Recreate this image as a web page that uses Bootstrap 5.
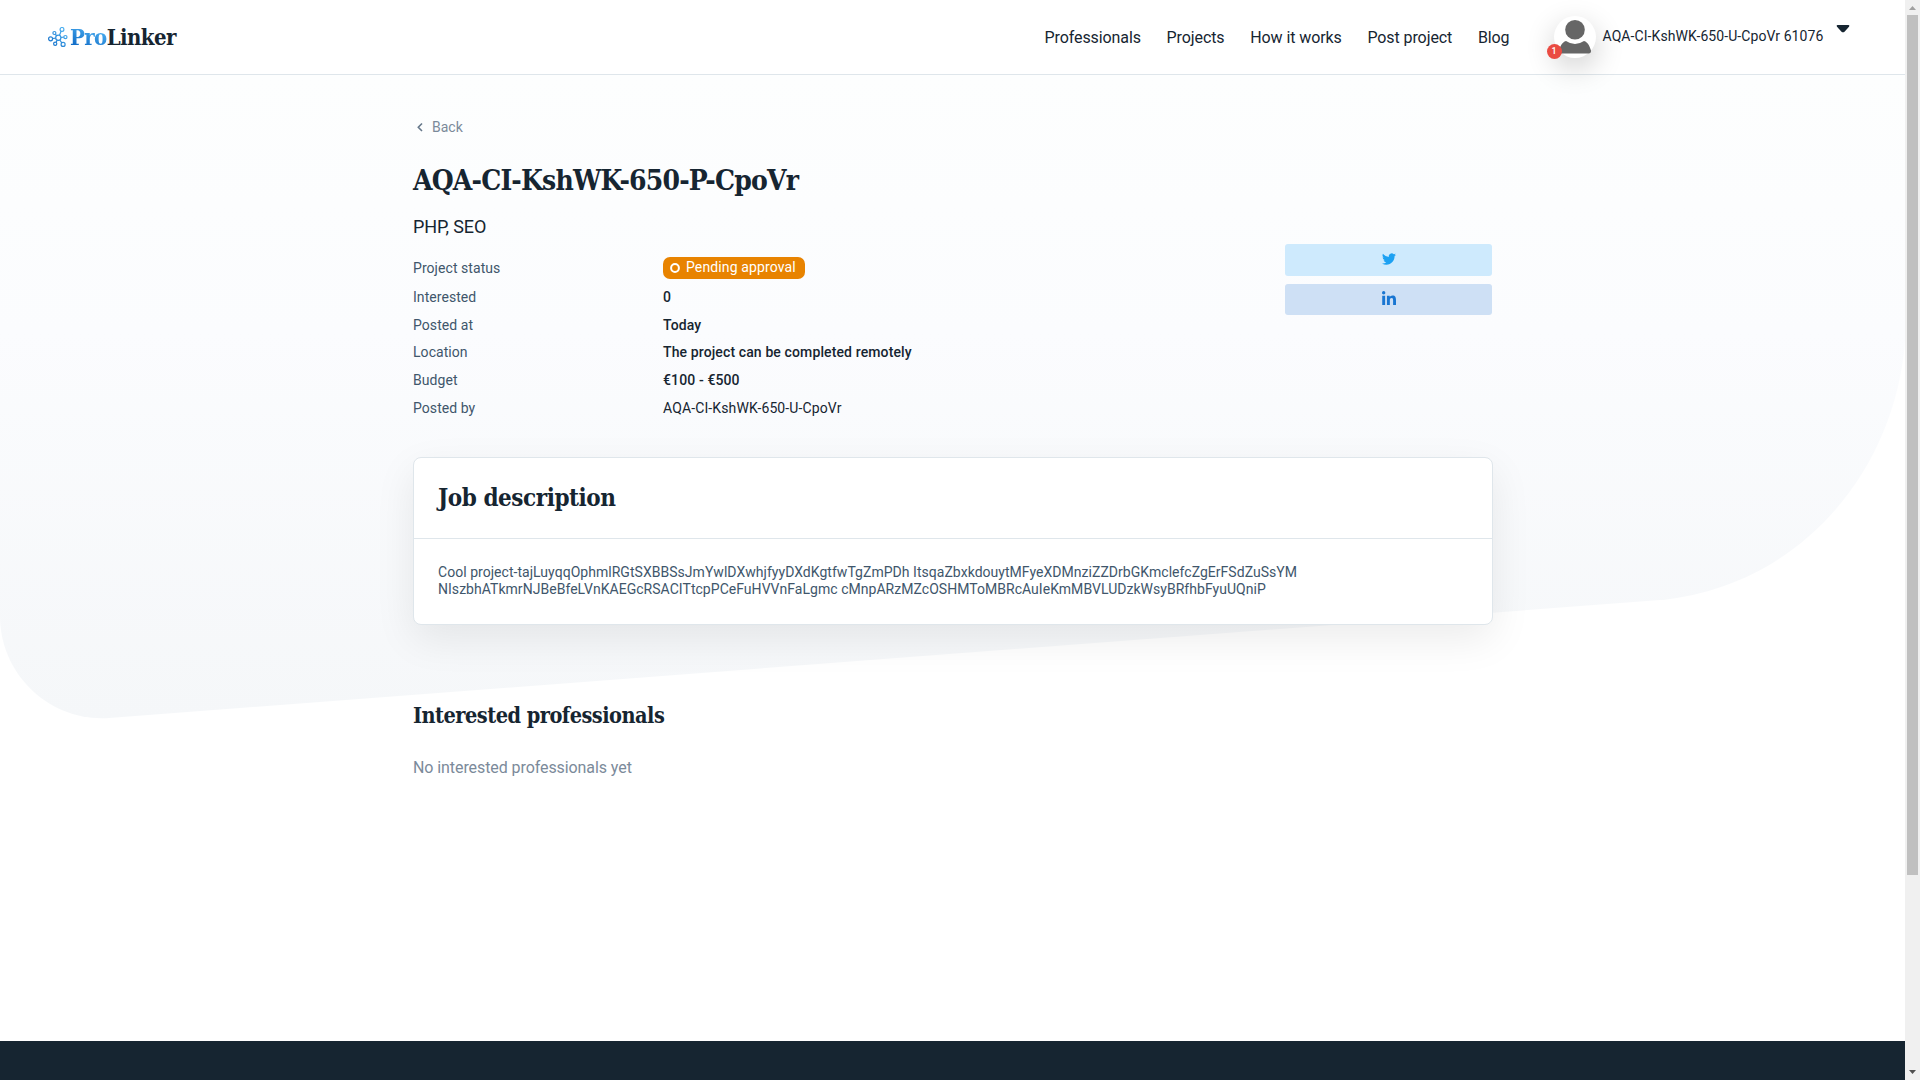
<!DOCTYPE html>
<html lang="en">
<head>
<meta charset="utf-8">
<meta name="viewport" content="width=device-width, initial-scale=1">
<title>ProLinker</title>
<link href="https://cdn.jsdelivr.net/npm/bootstrap@5.3.0/dist/css/bootstrap.min.css" rel="stylesheet">
<style>
html,body{height:100%;overflow:hidden}
body{font-family:Roboto,"Liberation Sans",sans-serif;color:#162531;background:#fff;font-size:14px}
.shell{height:1080px}
.site-header{height:75px;border-bottom:1px solid #dfe6eb;background:#fff;padding-left:48px}
.slab{font-family:"Roboto Slab","DejaVu Serif Condensed","DejaVu Serif",serif;font-weight:700;color:#162531;white-space:nowrap}
.brand-text{font-size:22px;line-height:26px;margin-left:2px;letter-spacing:-.6px}
.brand-text b{background:linear-gradient(20deg,#0b66c3 10%,#55b9f7 90%);-webkit-background-clip:text;background-clip:text;color:transparent}
.main-nav{gap:25.7px;font-size:16px;letter-spacing:-.09px;margin-top:1px}
.main-nav a,.user-name{color:#162531;text-decoration:none;white-space:nowrap}
.avatar{width:42px;height:42px;margin:0 0 1px 44px;box-shadow:0 10px 30px rgba(0,0,0,.2)}
.count{left:-7px;bottom:-1px;width:15px;height:15px;background:#ea4b42;font-size:9px;line-height:15px;font-weight:500}
.user-name{margin:0 0 1px 7px;width:222px;font-size:14px;letter-spacing:.08px}
.caret{margin:0 55.5px 17px 11px}
.hero-bg{left:0;top:75px;z-index:0}
.content{width:1080px;margin-left:413px;flex:1}
.back-link{color:#7b8a9a;text-decoration:none;margin-top:42px;line-height:20px}
.page-title{font-size:28px;line-height:38px;margin:25px 0 0;letter-spacing:-.83px}
.skills{font-size:18px;line-height:24px;margin-top:15px;letter-spacing:-.1px}
.facts{margin-top:13px}
.facts dt{width:250px;font-weight:400;color:#40566b;letter-spacing:.06px}
.facts dd{margin:0;font-weight:500;letter-spacing:.12px}
.fact{height:27.6px}
.fact-first{height:32px}
.facts .status{background:#e88300;color:#fff;border-radius:7px;height:22px;padding:0 9px 1px 7px;gap:6px;font-weight:400}
.share{width:207px;gap:8px;margin:5px 1px 0 0}
.share a{border-radius:3px;height:31.5px;padding-bottom:2px}
.tw{background:#ceeafd}.li{background:#cee0f5}
.panel{border:1px solid #dfe6eb;border-radius:8px;box-shadow:0 14px 40px rgba(0,0,0,.08);height:168px;margin-top:35px;background:#fff}
.panel-head{height:81px;border-bottom:1px solid #dfe6eb;padding:0 24px}
.panel h2{font-size:24px;line-height:32px;margin:0;letter-spacing:-.45px}
.panel p{margin:25px 24px 0;line-height:17px;color:#40566b;white-space:nowrap;letter-spacing:.035px}
.sub-title{font-size:21.5px;line-height:32px;letter-spacing:-.5px;margin:75px 0 0}
.empty{font-size:16px;color:#7b8a9a;margin-top:24px;letter-spacing:-.08px}
.site-footer{height:39px;background:#162531}
.rail{width:15px;background:#f0f0f0}
.thumb{width:11px;height:860px;background:#c0c0c0}
</style>
</head>
<body>
<div class="shell d-flex">
<div class="d-flex flex-column flex-grow-1 position-relative">
<svg class="hero-bg position-absolute" width="1905" height="650" aria-hidden="true"><defs><linearGradient id="hg" x1="0" y1="0" x2="0" y2="1"><stop stop-color="#fdfefe"/><stop offset=".4" stop-color="#fbfcfe"/><stop offset="1" stop-color="#f5f7f9"/></linearGradient></defs><path d="M0 0H1905V267C1894 400 1797 512 1660 525L109 643C50 647 0 600 0 541Z" fill="url(#hg)"/></svg>
<header class="site-header d-flex align-items-center flex-shrink-0 position-relative">
<a href="#" class="d-flex align-items-center text-decoration-none me-auto">
<svg width="20" height="20" viewBox="0 0 20 20" fill="none" stroke="url(#lg)" stroke-width="1.2"><defs><linearGradient id="lg" x1="0" y1="20" x2="20" y2="0" gradientUnits="userSpaceOnUse"><stop stop-color="#0b66c3"/><stop offset="1" stop-color="#59bdf8"/></linearGradient></defs><circle cx="10.3" cy="10.8" r="2.6"/><circle cx="14" cy="2.4" r="1.9"/><circle cx="17.4" cy="10.1" r="1.6"/><circle cx="15.1" cy="17.4" r="2"/><circle cx="7.2" cy="16.8" r="1.6"/><circle cx="2.6" cy="11.8" r="2"/><circle cx="6.4" cy="6" r="1.5"/><path d="m11.4 8.4 1.8-4.3M12.9 10.5l2.8-.3M11.8 13l2 2.8M9.2 13.2l-1.1 2.1M7.7 11.1l-3.1.4M8.6 8.8 7.4 7.2"/></svg>
<span class="slab brand-text"><b>Pro</b>Linker</span></a>
<nav class="main-nav d-flex"><a href="#">Professionals</a><a href="#">Projects</a><a href="#">How it works</a><a href="#">Post project</a><a href="#">Blog</a></nav>
<div class="avatar rounded-circle bg-white position-relative flex-shrink-0"><svg class="d-block" width="42" height="42" viewBox="0 0 42 42" fill="#666"><circle cx="21" cy="13.8" r="9.8"/><path d="M12 25Q21 31 30 25C34 26 36 31 37 34.5Q37.300 37.500 34.500 37.500H7.500Q4.700 37.500 5 34.500C6 31 8 26 12 25Z"/></svg>
<span class="count position-absolute rounded-circle text-white text-center">1</span></div>
<a href="#" class="user-name">AQA-CI-KshWK-650-U-CpoVr 61076</a>
<svg class="caret" width="14" height="8" viewBox="0 0 14 8"><path d="M1.500 0H12.500Q14 .3 13 1.700L8.500 6.700Q7 8 5.500 6.700L1 1.700Q0 .3 1.500 0Z" fill="#162531"/></svg>
</header>
<main class="content d-flex flex-column position-relative">
<a href="#" class="back-link d-flex align-items-center"><svg width="19" height="12" viewBox="0 0 19 12" fill="none" stroke="#66788a" stroke-width="1.600"><path d="M9 2.500 5.300 6.300 9 10"/></svg>Back</a>
<h1 class="slab page-title">AQA-CI-KshWK-650-P-CpoVr</h1>
<div class="skills">PHP, SEO</div>
<div class="d-flex justify-content-between">
<dl class="facts mb-0">
<div class="fact fact-first d-flex align-items-center"><dt>Project status</dt><dd class="status d-flex align-items-center"><svg width="10" height="10"><circle cx="5" cy="5" r="3.900" fill="none" stroke="#fff" stroke-width="2"/></svg>Pending approval</dd></div>
<div class="fact d-flex align-items-center"><dt>Interested</dt><dd>0</dd></div>
<div class="fact d-flex align-items-center"><dt>Posted at</dt><dd>Today</dd></div>
<div class="fact d-flex align-items-center"><dt>Location</dt><dd>The project can be completed remotely</dd></div>
<div class="fact d-flex align-items-center"><dt>Budget</dt><dd>€100 - €500</dd></div>
<div class="fact d-flex align-items-center"><dt>Posted by</dt><dd class="fw-normal">AQA-CI-KshWK-650-U-CpoVr</dd></div>
</dl>
<div class="share d-flex flex-column">
<a href="#" class="tw d-flex align-items-center justify-content-center" aria-label="Twitter"><svg width="14" height="14" viewBox="0 0 24 24" fill="#1da1f2"><path d="M24 4.600a10 10 0 0 1-2.800.8 5 5 0 0 0 2.100-2.700 10 10 0 0 1-3.100 1.200 4.900 4.900 0 0 0-8.400 4.500A14 14 0 0 1 1.700 3.200a4.900 4.900 0 0 0 1.500 6.500 5 5 0 0 1-2.200-.6v.1a4.900 4.900 0 0 0 3.900 4.800 5 5 0 0 1-2.200.1 4.900 4.900 0 0 0 4.600 3.400A10 10 0 0 1 0 19.500 14 14 0 0 0 7.500 21.700c9.100 0 14.400-7.700 14-14.600A10 10 0 0 0 24 4.600z"/></svg></a>
<a href="#" class="li d-flex align-items-center justify-content-center" aria-label="LinkedIn"><svg width="14" height="14" viewBox="0 0 448 448" fill="#1976d2"><path d="M100 448H7V149h93zM53.800 108.100C24.100 108.100 0 83.500 0 53.800a53.800 53.800 0 0 1 107.600 0c0 29.700-24.100 54.300-53.800 54.300zM448 448h-93V302.400c0-34.700-.7-79.200-48.300-79.200-48.300 0-55.700 37.700-55.700 76.700V448h-93V149h89v41h1.300c12.400-23.600 42.700-48.300 87.900-48.300 94 0 111.300 61.900 111.300 142.300z"/></svg></a>
</div>
</div>
<section class="panel">
<div class="panel-head d-flex align-items-center"><h2 class="slab">Job description</h2></div>
<p>Cool project-tajLuyqqOphmlRGtSXBBSsJmYwlDXwhjfyyDXdKgtfwTgZmPDh ItsqaZbxkdouytMFyeXDMnziZZDrbGKmclefcZgErFSdZuSsYM<br>NIszbhATkmrNJBeBfeLVnKAEGcRSACITtcpPCeFuHVVnFaLgmc cMnpARzMZcOSHMToMBRcAuIeKmMBVLUDzkWsyBRfhbFyuUQniP</p>
</section>
<h2 class="slab sub-title">Interested professionals</h2>
<div class="empty">No interested professionals yet</div>
</main>
<footer class="site-footer flex-shrink-0 position-relative"></footer>
</div>
<div class="rail d-flex flex-column align-items-center flex-shrink-0" aria-hidden="true">
<svg width="15" height="15"><path d="M4 10 7.500 6 11 10z" fill="#a0a0a0"/></svg>
<div class="thumb"></div>
<svg class="mt-auto" width="15" height="15"><path d="M4 5 7.500 9 11 5z" fill="#505050"/></svg>
</div>
</div>
<script src="https://cdn.jsdelivr.net/npm/bootstrap@5.3.0/dist/js/bootstrap.bundle.min.js"></script>
</body>
</html>
